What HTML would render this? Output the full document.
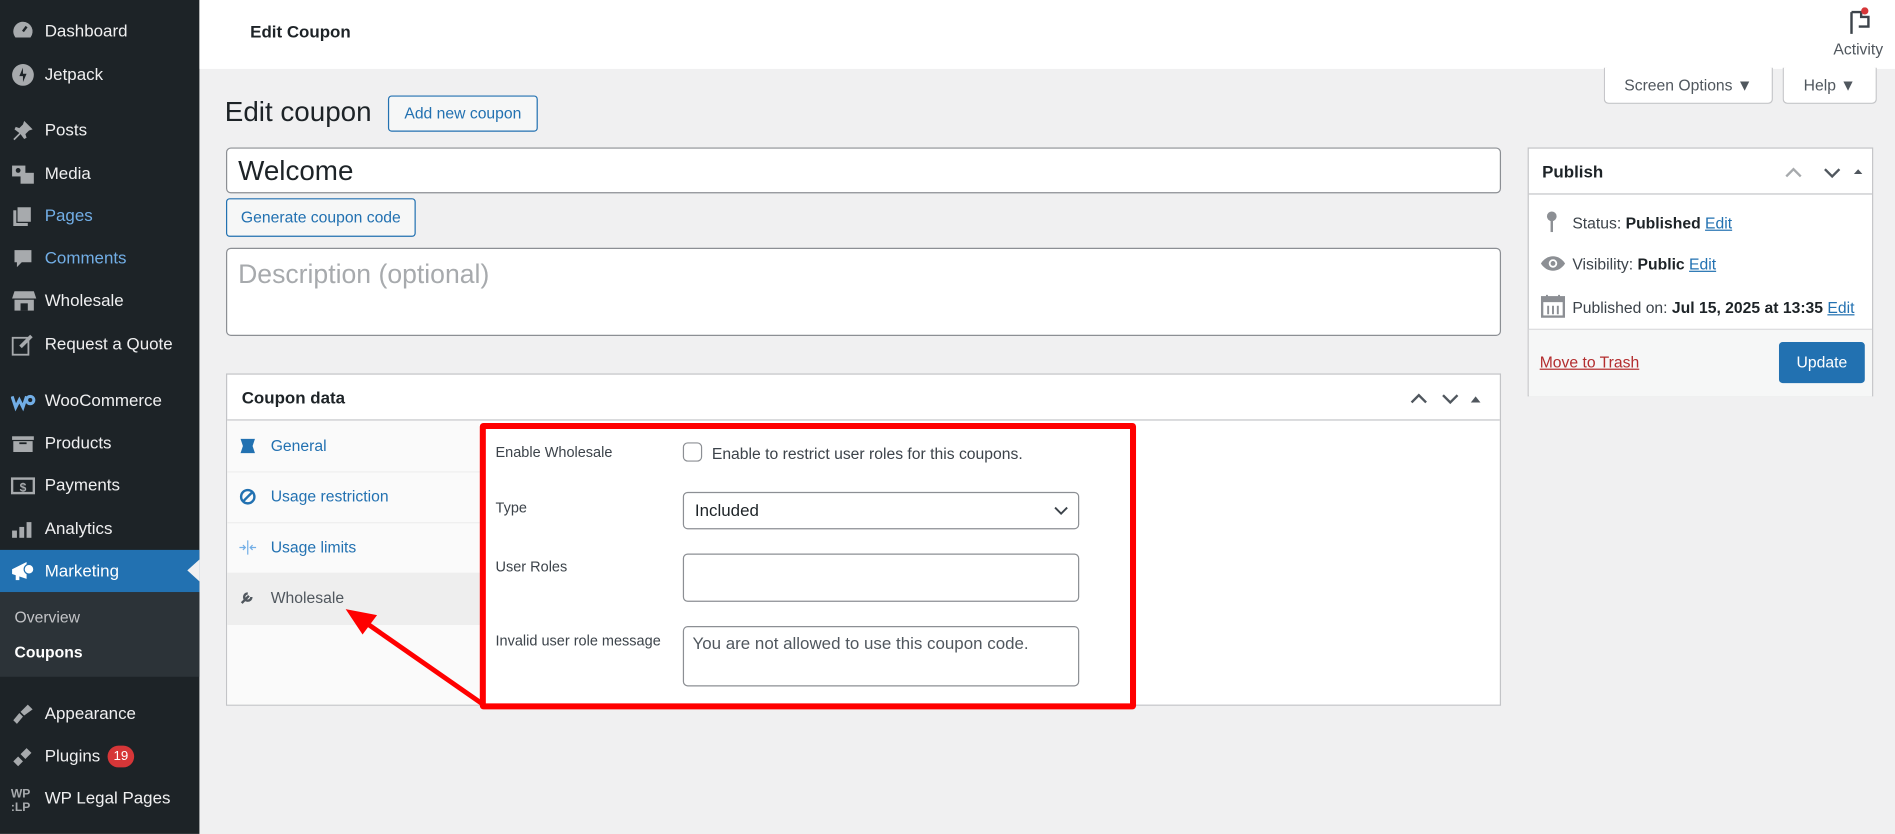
<!DOCTYPE html>
<html><head><meta charset="utf-8"><style>
html,body{margin:0;padding:0;width:1895px;height:810px;overflow:hidden;background:#f0f0f1;}
#s{position:absolute;left:0;top:0;width:1568px;height:680px;transform:scale(1.20855);transform-origin:0 0;font-family:"Liberation Sans",Arial,sans-serif;color:#1d2327;font-size:13px;background:#f0f0f1;}
.a{position:absolute;}
#side{left:0;top:0;width:165px;height:690px;background:#1d2327;}
.mi{position:absolute;left:0;width:165px;height:34px;line-height:34px;color:#f0f0f1;font-size:14px;}
.mi span{position:absolute;left:37px;}
.mi svg{position:absolute;left:9px;top:8px;}
.blue{color:#2271b1;}
.btn{position:absolute;border:1px solid #2271b1;color:#2271b1;border-radius:3px;background:#f6f7f7;font-size:13px;text-align:center;box-sizing:border-box;}
.inp{position:absolute;background:#fff;border:1px solid #8c8f94;border-radius:4px;box-sizing:border-box;}
.box{position:absolute;background:#fff;border:1px solid #c3c4c7;box-sizing:border-box;}
.tab{position:absolute;left:0;width:209px;height:42px;line-height:42px;border-bottom:1px solid #eee;color:#2271b1;font-size:13px;}
.tab span{position:absolute;left:36px;}
.lbl{position:absolute;left:410px;font-size:12px;color:#3c434a;}
u{text-decoration:underline;}
</style></head><body><div id="s">

<div id="side" class="a">
 <div class="mi" style="top:8px"><svg width="20" height="18" viewBox="0 0 20 18"><path d="M10 2a8 8 0 0 0-8 8c0 2 .7 3.6 1.8 5h12.4A8 8 0 0 0 10 2z" fill="#a7aaad"/><path d="M10 10l3-4" stroke="#1d2327" stroke-width="2"/></svg><span>Dashboard</span></div>
 <div class="mi" style="top:44px"><svg width="20" height="20" viewBox="0 0 20 20"><circle cx="10" cy="10" r="9" fill="#a7aaad"/><path d="M10 4l-3 7h3v5l3-7h-3z" fill="#1d2327"/></svg><span>Jetpack</span></div>
 <div class="mi" style="top:90px"><svg width="20" height="20" viewBox="0 0 20 20"><path d="M11 2l7 7-3 1-3 3 1 3-2 1-3-4-5 5-1-1 5-5-4-3 1-2 3 1 3-3z" fill="#a7aaad"/></svg><span>Posts</span></div>
 <div class="mi" style="top:126px"><svg width="20" height="20" viewBox="0 0 20 20"><rect x="1" y="3" width="11" height="9" fill="#a7aaad"/><rect x="8" y="9" width="11" height="9" fill="#a7aaad"/><circle cx="6" cy="7" r="2" fill="#1d2327"/></svg><span>Media</span></div>
 <div class="mi" style="top:161px"><svg width="20" height="20" viewBox="0 0 20 20"><rect x="2" y="5" width="12" height="13" fill="#a7aaad"/><rect x="5" y="2" width="12" height="13" fill="#a7aaad" stroke="#1d2327"/></svg><span style="color:#72aee6">Pages</span></div>
 <div class="mi" style="top:196px"><svg width="20" height="20" viewBox="0 0 20 20"><path d="M3 3h14v10H9l-4 4v-4H3z" fill="#a7aaad"/></svg><span style="color:#72aee6">Comments</span></div>
 <div class="mi" style="top:231px"><svg width="22" height="20" viewBox="0 0 22 20"><path d="M3 2h16l2 6H1z" fill="#a7aaad"/><rect x="3" y="9" width="16" height="9" fill="#a7aaad"/><rect x="8" y="12" width="6" height="6" fill="#1d2327"/></svg><span>Wholesale</span></div>
 <div class="mi" style="top:267px"><svg width="20" height="20" viewBox="0 0 20 20"><rect x="1.5" y="4.5" width="13" height="14" fill="none" stroke="#a7aaad" stroke-width="1.5"/><path d="M8 12l9-9" stroke="#a7aaad" stroke-width="3"/></svg><span>Request a Quote</span></div>
 <div class="mi" style="top:314px"><svg width="22" height="20" viewBox="0 0 22 20"><path d="M1 6l3 9 3-6 3 6 3-9M13 9a3 3 0 1 0 6 0 3 3 0 1 0-6 0" stroke="#72aee6" stroke-width="2.6" fill="none"/></svg><span>WooCommerce</span></div>
 <div class="mi" style="top:349px"><svg width="20" height="20" viewBox="0 0 20 20"><rect x="1" y="4" width="18" height="3" fill="#a7aaad"/><rect x="2" y="8" width="16" height="9" fill="#a7aaad"/><rect x="7" y="9" width="6" height="1.5" fill="#1d2327"/></svg><span>Products</span></div>
 <div class="mi" style="top:384px"><svg width="20" height="20" viewBox="0 0 20 20"><rect x="1" y="4" width="18" height="12" fill="none" stroke="#a7aaad" stroke-width="2"/><text x="10" y="14.5" font-size="10" font-weight="bold" text-anchor="middle" fill="#a7aaad" font-family="Liberation Sans">$</text></svg><span>Payments</span></div>
 <div class="mi" style="top:420px"><svg width="20" height="20" viewBox="0 0 20 20"><rect x="1" y="11" width="4" height="6" fill="#a7aaad"/><rect x="7" y="8" width="4" height="9" fill="#a7aaad"/><rect x="13" y="4" width="4" height="13" fill="#a7aaad"/></svg><span>Analytics</span></div>
 <div class="a" style="left:0;top:455px;width:165px;height:35px;background:#2271b1"></div>
 <div class="a" style="left:155px;top:463px;width:0;height:0;border-top:9px solid transparent;border-bottom:9px solid transparent;border-right:10px solid #f0f0f1"></div>
 <div class="mi" style="top:455px"><svg width="22" height="20" viewBox="0 0 22 20"><path d="M1 8l12-6v14L1 12z" fill="#fff"/><circle cx="15" cy="8" r="4" fill="#fff" stroke="#2271b1"/><rect x="4" y="12" width="3" height="5" fill="#fff"/></svg><span style="color:#fff">Marketing</span></div>
 <div class="a" style="left:0;top:490px;width:165px;height:70px;background:#2c3338"></div>
 <div class="a" style="left:12px;top:503px;font-size:13px;color:#c3c4c7">Overview</div>
 <div class="a" style="left:12px;top:532px;font-size:13px;color:#fff;font-weight:bold">Coupons</div>
 <div class="mi" style="top:573px"><svg width="20" height="20" viewBox="0 0 20 20"><path d="M14 2l4 4-7 5-3-3zM7 9l3 3-5 6-3-3z" fill="#a7aaad"/></svg><span>Appearance</span></div>
 <div class="mi" style="top:608px"><svg width="20" height="20" viewBox="0 0 20 20"><path d="M13 3l-5 5 4 4 5-5M6 10l4 4-4 4-4-4z" fill="#a7aaad"/></svg><span>Plugins</span></div>
 <div class="a" style="left:89px;top:617px;width:22px;height:18px;border-radius:9px;background:#d63638;color:#fff;font-size:11px;line-height:18px;text-align:center">19</div>
 <div class="mi" style="top:643px"><svg width="20" height="22" viewBox="0 0 20 22"><text x="0" y="9" font-size="10" font-weight="bold" fill="#a7aaad" font-family="Liberation Sans">WP</text><text x="0" y="20" font-size="10" font-weight="bold" fill="#a7aaad" font-family="Liberation Sans">:LP</text></svg><span>WP Legal Pages</span></div>
</div>

<div class="a" style="left:165px;top:0;width:1403px;height:57px;background:#fff"></div>
<div class="a" style="left:207px;top:18px;font-size:14px;font-weight:bold;color:#1d2327">Edit Coupon</div>
<svg class="a" style="left:1528px;top:6px" width="22" height="24" viewBox="0 0 22 24"><path d="M4 4v18M4 4h8v4h6v8h-8" stroke="#3c434a" stroke-width="2" fill="none"/><circle cx="15" cy="3" r="3" fill="#d63638"/></svg>
<div class="a" style="left:1517px;top:33px;font-size:13px;color:#50575e">Activity</div>

<div class="a" style="left:1327px;top:56px;width:140px;height:30px;background:#fff;border:1px solid #c3c4c7;border-top:none;border-radius:0 0 4px 4px;box-sizing:border-box;font-size:13px;color:#50575e;line-height:29px;text-align:center">Screen Options &#9660;</div>
<div class="a" style="left:1475px;top:56px;width:78px;height:30px;background:#fff;border:1px solid #c3c4c7;border-top:none;border-radius:0 0 4px 4px;box-sizing:border-box;font-size:13px;color:#50575e;line-height:29px;text-align:center">Help &#9660;</div>

<div class="a" style="left:186px;top:79px;font-size:23px;color:#1d2327">Edit coupon</div>
<div class="btn" style="left:321px;top:79px;width:124px;height:30px;line-height:28px">Add new coupon</div>

<div class="inp" style="left:187px;top:122px;width:1055px;height:38px;font-size:23px;line-height:36px;padding-left:9px">Welcome</div>
<div class="btn" style="left:187px;top:164px;width:157px;height:32px;line-height:30px">Generate coupon code</div>
<div class="inp" style="left:187px;top:205px;width:1055px;height:73px;font-size:22px;color:#a7aaad;padding:8px 9px">Description (optional)</div>

<div class="box" style="left:187px;top:309px;width:1055px;height:275px">
 <div class="a" style="left:12px;top:11px;font-size:14px;font-weight:bold">Coupon data</div>
 <div class="a" style="left:0;top:37px;width:1053px;height:1px;background:#c3c4c7"></div>
 <svg class="a" style="left:978px;top:12px" width="60" height="14" viewBox="0 0 60 14"><path d="M2 11l6-6 6 6M28 5l6 6 6-6" stroke="#50575e" stroke-width="2" fill="none"/><path d="M51 11l4-5 4 5z" fill="#50575e"/></svg>
 <div class="a" style="left:0;top:38px;width:209px;height:235px;background:#fafafa"></div>
 <div class="tab" style="top:38px"><svg class="a" style="left:11px;top:15px" width="12" height="12" viewBox="0 0 12 12"><path d="M0 0h12l-2 6 2 6H0l2-6z" fill="#2271b1"/></svg><span>General</span></div>
 <div class="tab" style="top:80px"><svg class="a" style="left:10px;top:14px" width="14" height="14" viewBox="0 0 14 14"><circle cx="7" cy="7" r="5.5" stroke="#2271b1" stroke-width="2" fill="none"/><path d="M3 11l8-8" stroke="#2271b1" stroke-width="2"/></svg><span>Usage restriction</span></div>
 <div class="tab" style="top:122px"><svg class="a" style="left:10px;top:15px" width="14" height="12" viewBox="0 0 14 12"><path d="M7 0v12M0 6h5M14 6H9M3 4l2 2-2 2M11 4L9 6l2 2" stroke="#72aee6" stroke-width="1" fill="none"/></svg><span>Usage limits</span></div>
 <div class="tab" style="top:164px;background:#eee;color:#50575e"><svg class="a" style="left:11px;top:14px" width="12" height="12" viewBox="0 0 12 12"><path d="M1 11l6-6M6 3a3 3 0 1 0 3 3" stroke="#50575e" stroke-width="2" fill="none"/></svg><span>Wholesale</span></div>
</div>

<div class="lbl" style="top:367px">Enable Wholesale</div>
<div class="a" style="left:565px;top:366px;width:16px;height:16px;border:1px solid #8c8f94;border-radius:4px;background:#fff;box-sizing:border-box"></div>
<div class="a" style="left:589px;top:368px;font-size:13px;color:#3c434a">Enable to restrict user roles for this coupons.</div>
<div class="lbl" style="top:413px">Type</div>
<div class="inp" style="left:565px;top:407px;width:328px;height:31px;font-size:14px;line-height:29px;padding-left:9px">Included<svg class="a" style="left:306px;top:11px" width="12" height="8" viewBox="0 0 12 8"><path d="M1 1l5 5 5-5" stroke="#3c434a" stroke-width="1.6" fill="none"/></svg></div>
<div class="lbl" style="top:462px">User Roles</div>
<div class="inp" style="left:565px;top:458px;width:328px;height:40px"></div>
<div class="lbl" style="top:523px">Invalid user role message</div>
<div class="inp" style="left:565px;top:518px;width:328px;height:50px;font-size:14px;color:#50575e;padding:5px 7px">You are not allowed to use this coupon code.</div>

<div class="a" style="left:397px;top:350px;width:543px;height:237px;border:5px solid #ff0000;border-radius:3px;box-sizing:border-box"></div>
<svg class="a" style="left:270px;top:495px" width="140" height="100" viewBox="0 0 140 100"><path d="M130 88L28 17" stroke="#ff0000" stroke-width="4"/><path d="M16 9l26 5-12 16z" fill="#ff0000"/></svg>

<div class="box" style="left:1264px;top:122px;width:286px;height:206px">
 <div class="a" style="left:11px;top:11px;font-size:14px;font-weight:bold">Publish</div>
 <svg class="a" style="left:212px;top:12px" width="64" height="14" viewBox="0 0 64 14"><path d="M1 11l6-6 6 6" stroke="#a7aaad" stroke-width="2" fill="none"/><path d="M33 5l6 6 6-6" stroke="#50575e" stroke-width="2" fill="none"/><path d="M57 9l3.5-4 3.5 4z" fill="#50575e"/></svg>
 <div class="a" style="left:0;top:37px;width:284px;height:1px;background:#c3c4c7"></div>
 <svg class="a" style="left:14px;top:51px" width="10" height="20" viewBox="0 0 10 20"><circle cx="5" cy="5" r="4" fill="#8c8f94"/><rect x="4" y="7" width="2" height="11" fill="#8c8f94"/></svg>
 <div class="a" style="left:36px;top:54px;color:#3c434a">Status: <b style="color:#1d2327">Published</b> <u class="blue">Edit</u></div>
 <svg class="a" style="left:9px;top:88px" width="22" height="14" viewBox="0 0 22 14"><path d="M1 7c5-8 15-8 20 0-5 8-15 8-20 0z" fill="#8c8f94"/><circle cx="11" cy="7" r="3.5" fill="#fff"/><circle cx="11" cy="7" r="2" fill="#8c8f94"/></svg>
 <div class="a" style="left:36px;top:88px;color:#3c434a">Visibility: <b style="color:#1d2327">Public</b> <u class="blue">Edit</u></div>
 <svg class="a" style="left:10px;top:120px" width="20" height="20" viewBox="0 0 20 20"><rect x="1" y="3" width="18" height="16" fill="none" stroke="#8c8f94" stroke-width="2"/><rect x="1" y="3" width="18" height="4" fill="#8c8f94"/><path d="M5 1v4M15 1v4M6 10v7M10 10v7M14 10v7" stroke="#8c8f94" stroke-width="1.6"/></svg>
 <div class="a" style="left:36px;top:124px;color:#3c434a">Published on: <b style="color:#1d2327">Jul 15, 2025 at 13:35</b> <u class="blue">Edit</u></div>
 <div class="a" style="left:0;top:149px;width:284px;height:55px;background:#f6f7f7;border-top:1px solid #dcdcde"></div>
 <div class="a" style="left:9px;top:169px;color:#b32d2e"><u>Move to Trash</u></div>
 <div class="a" style="left:207px;top:160px;width:71px;height:34px;background:#2271b1;border-radius:3px;color:#fff;font-size:13px;line-height:34px;text-align:center">Update</div>
</div>

</div></body></html>
